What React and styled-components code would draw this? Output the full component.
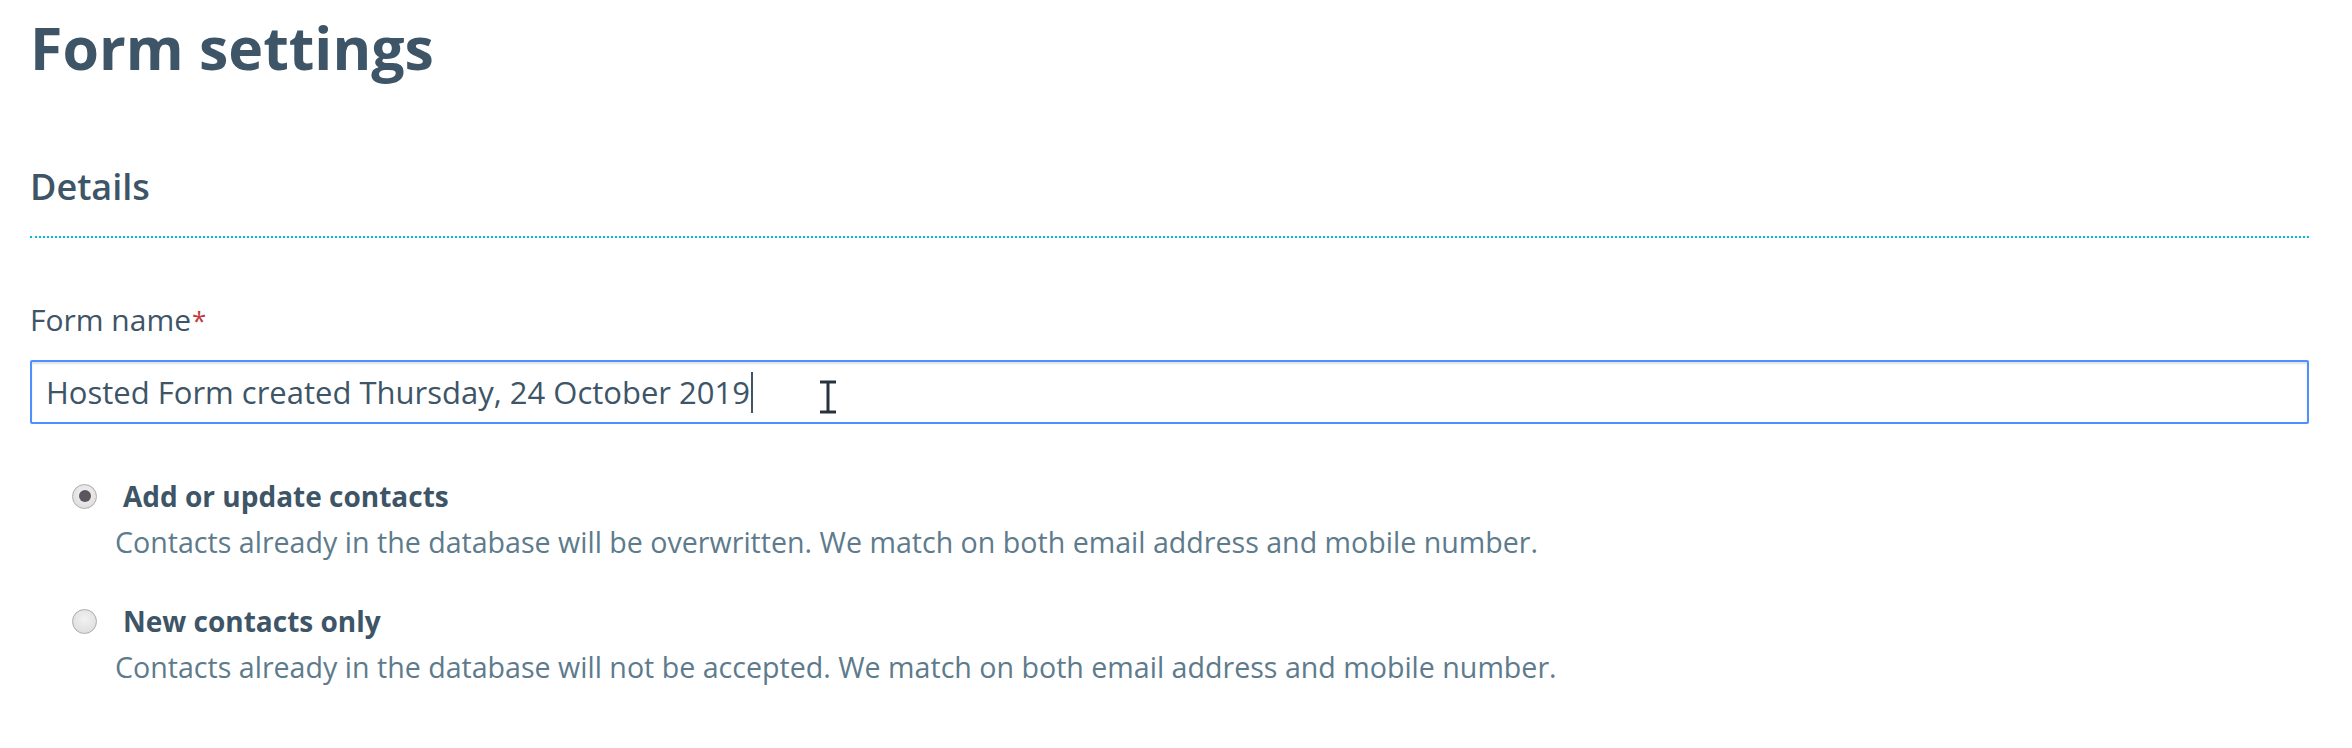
import styled, { createGlobalStyle } from "styled-components";

const GlobalStyle = createGlobalStyle`
  body {
    margin: 0;
    background: #fff;
    font-family: "Open Sans", "Noto Sans", sans-serif;
    color: #3d5567;
  }
`;

const Page = styled.div`
  padding: 10px 43px 40px 30px;
`;

const Title = styled.h1`
  margin: 0;
  font-size: 59px;
  line-height: 74px;
  font-weight: 700;
  color: #3d5567;
`;

const SectionHeader = styled.h2`
  margin: 81px 0 0;
  padding-bottom: 27px;
  font-size: 36px;
  line-height: 44px;
  font-weight: 600;
  color: #3d5567;
  border-bottom: 2px dotted #00bcd4;
`;

const FormElement = styled.div`
  margin-top: 62px;

  .form-elem-label {
    display: block;
    font-size: 30px;
    line-height: 40px;
    color: #3d5567;
    margin-bottom: 20px;
  }

  .form-elem-required {
    color: #c4393d;
    font-size: 26px;
    vertical-align: top;
    margin-left: 1px;
  }
`;

const InputBlock = styled.div`
  position: relative;
`;

const FakeInput = styled.div`
  display: flex;
  align-items: center;
  height: 64px;
  box-sizing: border-box;
  border: 2px solid #4d90fe;
  border-radius: 2px;
  box-shadow: inset 0 2px 2px rgba(0, 0, 0, 0.12);
  padding: 0 14px;
  font-size: 31px;
  color: #3d5567;
  white-space: nowrap;
`;

const Caret = styled.span`
  display: inline-block;
  width: 2px;
  height: 41px;
  background: #3d5567;
  margin-left: 1px;
`;

const MousePointer = styled.svg`
  position: absolute;
  left: 788px;
  top: 20px;
`;

const RadioGroup = styled.div`
  margin-top: 52px;
  padding-left: 42px;
`;

const Option = styled.label`
  display: block;
  margin-bottom: 36px;
`;

const OptionRow = styled.div`
  display: flex;
  align-items: center;
  gap: 26px;
`;

const RadioDot = styled.span`
  width: 25px;
  height: 25px;
  box-sizing: border-box;
  border-radius: 50%;
  border: 1px solid #acacac;
  background: radial-gradient(circle at 50% 40%, #f2f2f2, #d9d9d9);
  display: flex;
  align-items: center;
  justify-content: center;

  &::after {
    content: "";
    width: 12px;
    height: 12px;
    border-radius: 50%;
    background: #5b5560;
    display: ${(p) => (p.$checked ? "block" : "none")};
  }
`;

const OptionTitle = styled.span`
  font-size: 28px;
  line-height: 40px;
  font-weight: 700;
  color: #3d5567;
`;

const OptionHint = styled.div`
  margin: 3px 0 0 43px;
  font-size: 28.6px;
  line-height: 46px;
  color: #5d7b8c;
`;

const options = [
  {
    title: "Add or update contacts",
    hint: "Contacts already in the database will be overwritten. We match on both email address and mobile number.",
    checked: true,
  },
  {
    title: "New contacts only",
    hint: "Contacts already in the database will not be accepted. We match on both email address and mobile number.",
    checked: false,
  },
];

export default function App() {
  return (
    <>
      <GlobalStyle />
      <Page>
        <Title>Form settings</Title>
        <SectionHeader>Details</SectionHeader>

        <FormElement>
          <span className="form-elem-label">
            Form name<span className="form-elem-required">*</span>
          </span>
          <InputBlock>
            <FakeInput>
              Hosted Form created Thursday, 24 October 2019
              <Caret />
            </FakeInput>
            <MousePointer width="20" height="34" viewBox="0 0 20 34">
              <path
                d="M2 2h16M10 2v30M2 32h16"
                stroke="#26333d"
                strokeWidth="3"
                fill="none"
              />
            </MousePointer>
          </InputBlock>
        </FormElement>

        <RadioGroup>
          {options.map((o) => (
            <Option key={o.title}>
              <OptionRow>
                <RadioDot $checked={o.checked} />
                <OptionTitle>{o.title}</OptionTitle>
              </OptionRow>
              <OptionHint>{o.hint}</OptionHint>
            </Option>
          ))}
        </RadioGroup>
      </Page>
    </>
  );
}
